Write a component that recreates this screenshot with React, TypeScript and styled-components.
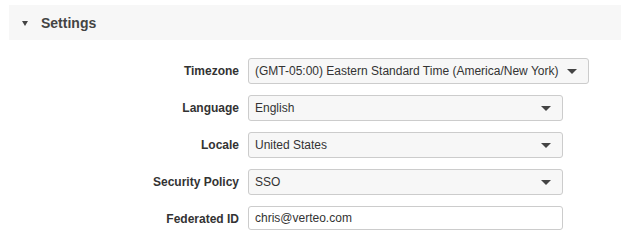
import styled, { createGlobalStyle } from 'styled-components';

const GlobalStyle = createGlobalStyle`
  body {
    margin: 0;
    background: #fff;
    font-family: "Liberation Sans", Arial, Helvetica, sans-serif;
    color: #333;
  }
`

type Field = {
  label: string;
  value: string;
  kind: 'select' | 'input';
  wide?: boolean;
};

const fields: Field[] = [
  { label: 'Timezone', value: '(GMT-05:00) Eastern Standard Time (America/New York)', kind: 'select', wide: true },
  { label: 'Language', value: 'English', kind: 'select' },
  { label: 'Locale', value: 'United States', kind: 'select' },
  { label: 'Security Policy', value: 'SSO', kind: 'select' },
  { label: 'Federated ID', value: 'chris@verteo.com', kind: 'input' },
]

const Caret = ({ size = 10 }: { size?: number }) => (
  <svg width={size} height={size / 2} viewBox="0 0 10 5" aria-hidden>
    <path d="M0 0 L10 0 L5 5 Z" fill="#444" />
  </svg>
)

const App = () => (
  <>
    <GlobalStyle />
    <Section>
      <SectionHeader>
        <HeaderCaret>
          <svg width="6" height="5" viewBox="0 0 6 5" aria-hidden>
            <path d="M0 0 L6 0 L3 5 Z" fill="#444" />
          </svg>
        </HeaderCaret>
        <HeaderTitle>Settings</HeaderTitle>
      </SectionHeader>
      <Form>
        {fields.map(({ label, value, kind, wide }) => (
          <Row key={label}>
            <Label>{label}</Label>
            {kind === 'select' ? (
              <SelectBox $wide={wide}>
                <SelectText>{value}</SelectText>
                <Caret />
              </SelectBox>
            ) : (
              <TextInput defaultValue={value} />
            )}
          </Row>
        ))}
      </Form>
    </Section>
  </>
)

const Section = styled.div`
  padding: 5px 0 0 9px;
`

const SectionHeader = styled.div`
  height: 35px;
  background: #f7f7f7;
  display: flex;
  align-items: center;
  padding-left: 13px;
`

const HeaderCaret = styled.span`
  display: flex;
  width: 19px;
  margin-top: 1px;
`

const HeaderTitle = styled.span`
  font-size: 14px;
  font-weight: bold;
  color: #444;
`

const Form = styled.div`
  display: grid;
  grid-template-columns: 230px auto;
  column-gap: 9px;
  row-gap: 11px;
  padding-top: 18px;
`

const Row = styled.div`
  display: contents;
`

const Label = styled.div`
  height: 26px;
  display: flex;
  align-items: center;
  justify-content: flex-end;
  font-size: 12px;
  font-weight: bold;
  color: #333;
`

const SelectBox = styled.div<{ $wide?: boolean }>`
  box-sizing: border-box;
  height: 26px;
  width: ${({ $wide }) => ($wide ? '341px' : '315px')};
  display: flex;
  align-items: center;
  justify-content: space-between;
  padding: 0 11px 0 6px;
  border: 1px solid #ccc;
  border-radius: 3px;
  background: #f7f7f7;
`

const SelectText = styled.span`
  font-size: 12px;
  color: #333;
  white-space: nowrap;
`

const TextInput = styled.input`
  box-sizing: border-box;
  height: 24px;
  width: 315px;
  padding: 0 6px;
  border: 1px solid #ccc;
  border-radius: 3px;
  background: #fff;
  font-family: inherit;
  font-size: 12px;
  color: #333;
  outline: none;
`

export default App
